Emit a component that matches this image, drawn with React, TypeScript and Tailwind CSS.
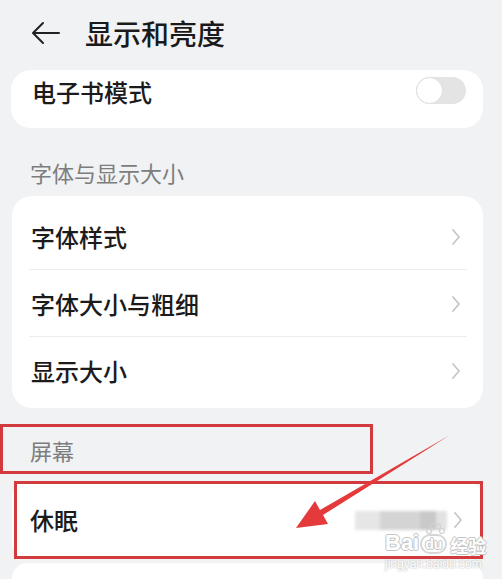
import React from "react";

const font = { fontFamily: '"Noto Sans CJK SC", "Noto Sans", sans-serif' };
const outline = "1px 0 0 #c4c4c4, -1px 0 0 #c4c4c4, 0 1px 0 #c4c4c4, 0 -1px 0 #c4c4c4";

function Chevron() {
  return (
    <svg width="10" height="18" viewBox="0 0 10 18" fill="none">
      <path d="M2 2 L8 9 L2 16" stroke="#c6c6c6" strokeWidth="1.8" strokeLinecap="round" strokeLinejoin="round" />
    </svg>
  );
}

function Row({ label, divider }: { label: string; divider?: boolean }) {
  return (
    <div className="relative flex h-[67px] items-center justify-between pl-[19px] pr-[22px]">
      <span className="text-[24px] font-medium text-[#1b1b1b]">{label}</span>
      <Chevron />
      {divider && <div className="absolute bottom-0 left-[17px] right-[16px] h-px bg-[#ececec]" />}
    </div>
  );
}

export default function App() {
  return (
    <div className="relative h-[579px] w-[502px] overflow-hidden bg-[#f1f2f4]" style={font}>
      {/* header */}
      <div className="flex h-[70px] items-center pb-[4px] pl-[31px]">
        <svg width="30" height="24" viewBox="0 0 30 24" fill="none">
          <path d="M28 12 H3 M12 2 L2 12 L12 22" stroke="#222" strokeWidth="2" strokeLinecap="round" strokeLinejoin="round" />
        </svg>
        <span className="ml-[24px] text-[28px] font-medium text-[#1a1a1a]">显示和亮度</span>
      </div>

      {/* ebook mode */}
      <div className="ml-[11px] mr-[19px] flex h-[58px] items-start justify-between rounded-[20px] bg-white pl-[21px] pr-[17px] pt-[4px]">
        <span className="text-[24px] font-medium text-[#1b1b1b]">电子书模式</span>
        <div className="relative mt-[3px] h-[27px] w-[50px] rounded-full bg-[#e4e4e4]">
          <div className="absolute left-0 top-0 h-[27px] w-[27px] rounded-full border border-[#dedede] bg-white" />
        </div>
      </div>

      {/* section label */}
      <div className="flex h-[68px] items-center pl-[30px] pt-[20px] text-[22px] text-[#7d7d7d]">字体与显示大小</div>

      {/* font card */}
      <div className="ml-[12px] mr-[19px] rounded-[20px] bg-white pb-[4px] pt-[7px]">
        <Row label="字体样式" divider />
        <Row label="字体大小与粗细" divider />
        <Row label="显示大小" />
      </div>

      {/* screen label */}
      <div className="relative flex h-[74px] items-center pl-[30px] pt-[10px] text-[22px] text-[#7d7d7d]">
        屏幕
        <div className="absolute left-0 top-[16px] h-[50px] w-[373px] border-[3px] border-[#d33a3e]" />
      </div>

      {/* sleep card */}
      <div className="relative ml-[12px] mr-[19px] flex h-[76px] items-center justify-between rounded-[16px] bg-white pl-[18px] pr-[20px]">
        <span className="text-[24px] font-medium text-[#1b1b1b]">休眠</span>
        <div className="flex items-center gap-[6px]">
          <div className="flex h-[19px] blur-[1.5px]">
            <div className="w-[25px] bg-[#e6e6e6]" />
            <div className="w-[40px] bg-[#d4d4d4]" />
            <div className="w-[16px] bg-[#c9c9c9]" />
            <div className="w-[11px] bg-[#e2e2e2]" />
          </div>
          <Chevron />
        </div>
        <div className="absolute -top-[1px] left-[2px] right-0 h-[78px] border-[3px] border-[#d33a3e]" />
      </div>

      {/* next card peek */}
      <div className="ml-[12px] mr-[19px] mt-[5px] h-[30px] rounded-[16px] bg-white" />

      {/* watermark */}
      <div className="absolute left-[385px] top-[530px] flex flex-col items-start leading-none">
        <div className="flex h-[24px] items-end">
          <span className="text-[22px] font-bold leading-none text-white" style={{ fontFamily: '"Liberation Sans", sans-serif', textShadow: outline }}>Bai</span>
          <span className="relative ml-[1px] flex h-[20px] w-[27px] items-center justify-center rounded-full border-2 border-[#d6d6d6] text-[14px] font-bold leading-none text-white" style={{ fontFamily: '"Liberation Sans", sans-serif', textShadow: outline }}>
            du
            <svg className="absolute -top-[13px] left-[3px]" width="20" height="14" viewBox="0 0 20 14">
              <circle cx="4" cy="8" r="2.5" fill="none" stroke="#d0d0d0" strokeWidth="1.2" />
              <circle cx="8" cy="3.5" r="2.5" fill="none" stroke="#d0d0d0" strokeWidth="1.2" />
              <circle cx="13" cy="3.5" r="2.5" fill="none" stroke="#d0d0d0" strokeWidth="1.2" />
              <circle cx="17" cy="8" r="2.5" fill="none" stroke="#d0d0d0" strokeWidth="1.2" />
            </svg>
          </span>
          <span className="ml-[3px] text-[18px] font-bold leading-none text-white" style={{ textShadow: outline }}>经验</span>
        </div>
        <span className="mt-[4px] text-[12px] leading-none text-white" style={{ fontFamily: '"Liberation Sans", sans-serif', textShadow: "0 0 2px #9a9a9a" }}>jingyan.baidu.com</span>
      </div>

      {/* arrow */}
      <svg className="pointer-events-none absolute left-0 top-0" width="502" height="579">
        <polygon points="450,435 323,515 328,524 296,528 315,501 320,510" fill="#e43a3c" />
      </svg>
    </div>
  );
}
